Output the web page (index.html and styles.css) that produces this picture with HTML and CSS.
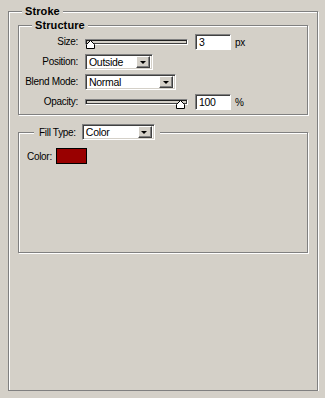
FILE: index.html
```html
<!DOCTYPE html>
<html lang="en">
<head>
    <meta charset="UTF-8">
    <title>Stroke</title>
    <link rel="stylesheet" href="styles.css">
</head>
<body>
<div class="group group-outer">
    <div class="group-head"><span class="group-title">Stroke</span></div>

    <div class="group group-inner group-structure">
        <div class="group-head"><span class="group-title">Structure</span></div>
        <div class="form-grid">
            <label class="field-label">Size:</label>
            <div class="field">
                <div class="slider">
                    <span class="slider-track"></span>
                    <svg class="slider-thumb thumb-left" width="9" height="9" viewBox="0 0 9 9"><path d="M0.5 8.5V4.5L4.5 0.5L8.5 4.5V8.5Z" fill="#fff" stroke="#000"/></svg>
                </div>
                <div class="num-input">3</div>
                <span class="unit">px</span>
            </div>

            <label class="field-label">Position:</label>
            <div class="field">
                <div class="dropdown dropdown-position">
                    <span class="dropdown-text">Outside</span>
                    <span class="dropdown-btn"><span class="arrow"></span></span>
                </div>
            </div>

            <label class="field-label">Blend Mode:</label>
            <div class="field">
                <div class="dropdown dropdown-blend">
                    <span class="dropdown-text">Normal</span>
                    <span class="dropdown-btn"><span class="arrow"></span></span>
                </div>
            </div>

            <label class="field-label">Opacity:</label>
            <div class="field">
                <div class="slider">
                    <span class="slider-track"></span>
                    <svg class="slider-thumb thumb-right" width="9" height="9" viewBox="0 0 9 9"><path d="M0.5 8.5V4.5L4.5 0.5L8.5 4.5V8.5Z" fill="#fff" stroke="#000"/></svg>
                </div>
                <div class="num-input">100</div>
                <span class="unit">%</span>
            </div>
        </div>
    </div>

    <div class="group group-inner group-fill">
        <div class="group-head fill-head">
            <div class="fill-legend">
                <label class="fill-label">Fill Type:</label>
                <div class="dropdown dropdown-fill">
                    <span class="dropdown-text">Color</span>
                    <span class="dropdown-btn"><span class="arrow"></span></span>
                </div>
            </div>
        </div>
        <div class="color-row">
            <span class="color-label">Color:</span>
            <span class="swatch"></span>
        </div>
    </div>
</div>
</body>
</html>
```

FILE: styles.css
```css
body {
    font-family: "Liberation Sans", Arial, sans-serif;
    font-size: 10px;
    letter-spacing: -0.3px;
    background-color: #d4d0c8;
    color: #000;
    margin: 0;
    padding: 0;
}

/* etched group box, title sits on the top edge */
.group {
    border: 1px solid #808080;
    box-shadow: inset 1px 1px 0 #fff, 1px 1px 0 #fff;
    box-sizing: border-box;
}

.group-head {
    display: flex;
    margin-top: -7px;
    padding-left: 13px;
}

.group-title {
    font-weight: bold;
    font-size: 11px;
    letter-spacing: 0.1px;
    line-height: 13px;
    padding: 0 3px;
    background-color: #d4d0c8;
}

.group-outer {
    margin: 11px 7px 0 8px;
    height: 380px;
}

.group-inner {
    margin-left: 9px;
    margin-right: 9px;
}

.group-structure {
    margin-top: 7px;
    padding-bottom: 4px;
}

.form-grid {
    display: grid;
    grid-template-columns: 59px auto;
    column-gap: 7px;
    row-gap: 4px;
    align-items: center;
    margin-top: 2px;
}

.field-label {
    text-align: right;
    line-height: 16px;
    white-space: nowrap;
}

.field {
    display: flex;
    align-items: center;
    height: 16px;
}

.slider {
    position: relative;
    width: 103px;
    height: 10px;
    margin-right: 7px;
    display: flex;
    align-items: center;
}

.slider-track {
    display: block;
    width: 100%;
    height: 6px;
    box-sizing: border-box;
    border: 1px solid;
    border-color: #808080 #fff #fff #808080;
    box-shadow: inset 1px 1px 0 #202020, inset -1px -1px 0 #404040;
    background-color: #d4d0c8;
}

.slider-thumb {
    position: absolute;
    top: 3px;
}

.thumb-left {
    left: 1px;
}

.thumb-right {
    right: 3px;
}

.num-input {
    width: 36px;
    height: 16px;
    box-sizing: border-box;
    background-color: #fff;
    border: 1px solid;
    border-color: #808080 #fff #fff #808080;
    box-shadow: inset 1px 1px 0 #404040;
    padding: 0 0 0 3px;
    line-height: 14px;
    font-size: 10.5px;
}

.unit {
    margin-left: 4px;
}

.dropdown {
    display: flex;
    align-items: center;
    height: 16px;
    box-sizing: border-box;
    background-color: #fff;
    border: 1px solid;
    border-color: #808080 #fff #fff #808080;
    box-shadow: inset 1px 1px 0 #404040, inset -1px -1px 0 #d4d0c8;
    padding: 1px 2px 1px 1px;
}

.dropdown-position {
    width: 68px;
}

.dropdown-blend {
    width: 91px;
}

.dropdown-fill {
    width: 73px;
}

.dropdown-text {
    flex: 1;
    padding-left: 2px;
    line-height: 12px;
    font-size: 10.5px;
}

.dropdown-btn {
    width: 14px;
    height: 12px;
    box-sizing: border-box;
    background-color: #d4d0c8;
    border: 1px solid;
    border-color: #fff #404040 #404040 #fff;
    box-shadow: inset -1px -1px 0 #808080;
    display: flex;
    align-items: center;
    justify-content: center;
}

.arrow {
    width: 0;
    height: 0;
    border-left: 3px solid transparent;
    border-right: 3px solid transparent;
    border-top: 3px solid #000;
    margin-right: 1px;
}

.group-fill {
    margin-top: 17px;
    height: 121px;
    padding: 0 8px;
}

.fill-head {
    margin-top: -9px;
    padding-left: 7px;
}

.fill-legend {
    display: flex;
    align-items: center;
    gap: 6px;
    padding: 0 5px;
    background-color: #d4d0c8;
}

.color-row {
    display: flex;
    align-items: center;
    gap: 4px;
    margin-top: 8px;
}

.swatch {
    width: 31px;
    height: 16px;
    box-sizing: border-box;
    background-color: #990000;
    border: 1px solid #000;
}
```
